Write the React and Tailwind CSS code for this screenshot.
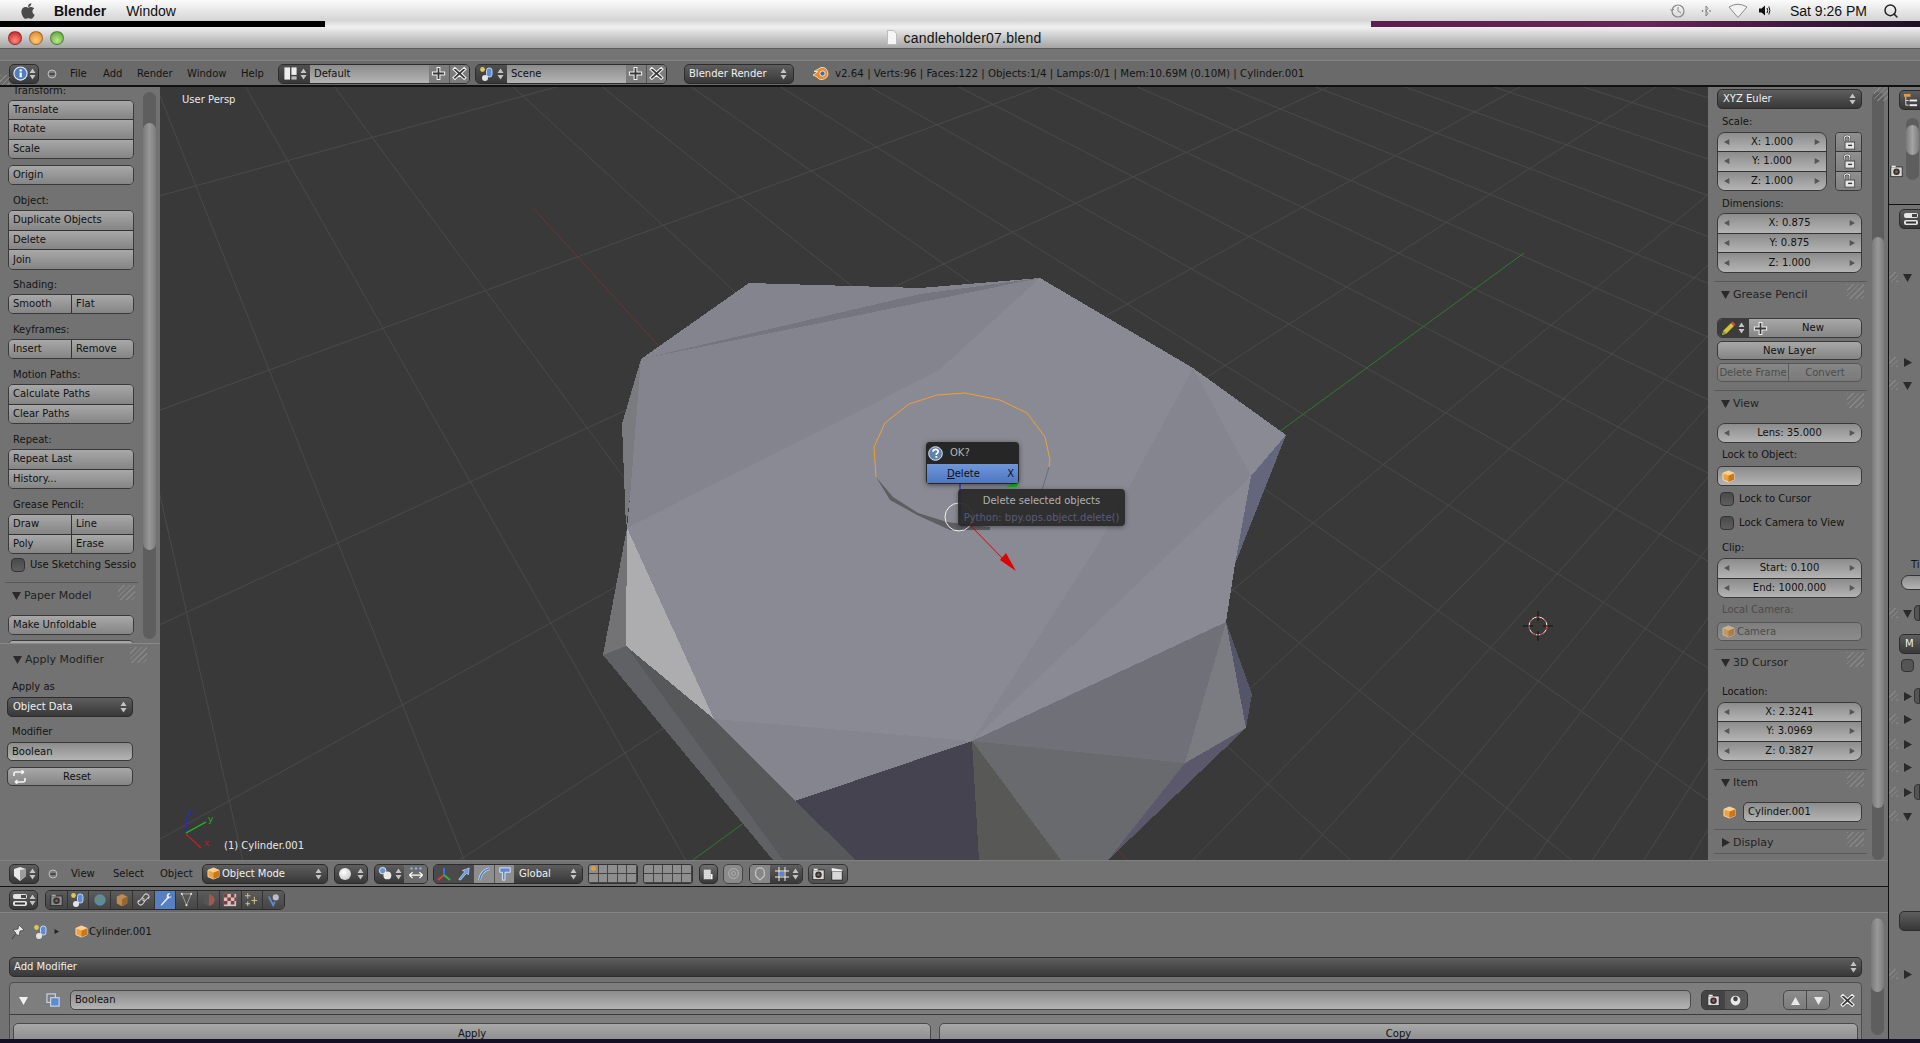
import { Search } from "lucide-react";
import { FaApple } from "react-icons/fa";

const darkBtn = "rounded-[5px] border border-[#2c2c2c] bg-gradient-to-b from-[#5e5e5e] to-[#383838] text-[#f0f0f0]";
const lightBtn = "border-[#3a3a3a] bg-gradient-to-b from-[#a8a8a8] to-[#858585] text-[#111]";
const fieldBg = "bg-gradient-to-b from-[#8c8c8c] to-[#b4b4b4] text-[#111]";
const hatch = "bg-[repeating-linear-gradient(135deg,#868686_0px,#868686_1px,transparent_1px,transparent_4px)]";

function Spin({ color = "#c4c4c4" }) {
  return (
    <svg width="7" height="12" viewBox="0 0 7 12" className="shrink-0">
      <path d="M3.5 0.5 L6.5 5 H0.5 Z M3.5 11.5 L0.5 7 H6.5 Z" fill={color} />
    </svg>
  );
}

function Tri({ dir = "down", className = "", color = "#2a2a2a", size = 9 }) {
  const d = dir === "down" ? "M0 1 H9 L4.5 9 Z" : dir === "right" ? "M1 0 L9 4.5 L1 9 Z" : dir === "up" ? "M4.5 1 L9 9 H0 Z" : "M8 0 L0 4.5 L8 9 Z";
  return (
    <svg width={size} height={size} viewBox="0 0 9 9" className={`shrink-0 ${className}`}>
      <path d={d} fill={color} />
    </svg>
  );
}

function Cube({ size = 14, faded = false }) {
  return (
    <svg width={size} height={size} viewBox="0 0 14 14" className="shrink-0" opacity={faded ? 0.6 : 1}>
      <path d="M7 1 L13 3.5 V10.5 L7 13 L1 10.5 V3.5 Z" fill="#f0a040" stroke="#fff1d6" strokeWidth="0.8" />
      <path d="M7 6 L13 3.5 V10.5 L7 13 Z" fill="#c9771c" />
      <path d="M1 3.5 L7 1 L13 3.5 L7 6 Z" fill="#ffd08a" />
    </svg>
  );
}

function Sq({ children, w = 16, h = 16 }) {
  return (
    <svg width={w} height={h} viewBox="0 0 16 16" className="shrink-0">
      {children}
    </svg>
  );
}

const InfoIcon = () => (
  <Sq w={15} h={15}>
    <circle cx="8" cy="8" r="7" fill="#4f7fc0" stroke="#e8eef8" strokeWidth="1.2" />
    <rect x="7" y="7" width="2.4" height="5" fill="#fff" />
    <rect x="7" y="3.6" width="2.4" height="2.2" fill="#fff" />
  </Sq>
);
const LayoutIcon = () => (
  <Sq w={15} h={15}>
    <rect x="1.5" y="1.5" width="6" height="13" fill="#eee" />
    <rect x="9" y="1.5" width="5.5" height="8" fill="#eee" />
    <rect x="9" y="11" width="5.5" height="3.5" fill="#bbb" />
  </Sq>
);
const SceneIcon = () => (
  <Sq>
    <circle cx="3.5" cy="3.5" r="2.4" fill="#d8c85c" />
    <rect x="7.5" y="2" width="5.5" height="9" rx="2.5" fill="#5a8ed8" stroke="#e6eefa" strokeWidth="0.8" />
    <circle cx="6" cy="12" r="3" fill="#e4e4e4" />
  </Sq>
);
const ViewIcon = () => (
  <Sq>
    <path d="M2 3 L8 1 L14 3 V10 L8 15 L2 10 Z" fill="#e8e8e8" />
    <path d="M8 4 V15 L14 10 V3 Z" fill="#9c9c9c" />
  </Sq>
);
const PropsIcon = () => (
  <Sq>
    <rect x="1" y="2" width="14" height="5" rx="2" fill="#e4e4e4" />
    <rect x="1" y="9" width="14" height="5" rx="2" fill="#e4e4e4" />
    <rect x="3" y="10.5" width="10" height="2" fill="#333" />
    <rect x="9" y="3" width="5" height="3" fill="#444" />
  </Sq>
);
const PlusIcon = () => (
  <Sq w={15} h={15}>
    <path d="M6.5 1.5 H9.5 V6.5 H14.5 V9.5 H9.5 V14.5 H6.5 V9.5 H1.5 V6.5 H6.5 Z" fill="#3a3a3a" stroke="#f2f2f2" strokeWidth="1.1" />
  </Sq>
);
const XIcon = () => (
  <Sq w={15} h={15}>
    <path d="M3 1.5 L8 6 L13 1.5 L15 3.5 L10.2 8 L15 12.5 L13 14.5 L8 10 L3 14.5 L1 12.5 L5.8 8 L1 3.5 Z" fill="#3a3a3a" stroke="#f2f2f2" strokeWidth="1.1" />
  </Sq>
);
const LockIcon = () => (
  <Sq w={14} h={17}>
    <path d="M2.5 6 V3.5 A3.2 3 0 0 1 9 3.5 V7" fill="none" stroke="#222" strokeWidth="2.4" />
    <path d="M2.5 6 V3.5 A3.2 3 0 0 1 9 3.5 V7" fill="none" stroke="#f4f4f4" strokeWidth="1.2" />
    <rect x="3.5" y="7.5" width="11" height="8" fill="#e6e6e6" stroke="#333" strokeWidth="0.8" />
    <rect x="7" y="10.5" width="4.5" height="1.6" fill="#333" />
  </Sq>
);
const CameraIcon = ({ dim = false }) => (
  <Sq w={13} h={14}>
    <rect x="1" y="3" width="14" height="12" fill={dim ? "#8c8c8c" : "#d8d8d8"} stroke="#222" />
    <rect x="2" y="1.5" width="5" height="2" fill={dim ? "#aaa" : "#eee"} />
    <circle cx="8" cy="9" r="4" fill="#333" />
    <circle cx="8" cy="9" r="1.8" fill="#a05050" />
  </Sq>
);
const EyeIcon = () => (
  <Sq w={13} h={13}>
    <circle cx="8" cy="8" r="6" fill="#e8e8e8" />
    <circle cx="8" cy="6" r="2.8" fill="#444" />
  </Sq>
);
const Minus = ({ className = "" }) => (
  <svg width="10" height="10" viewBox="0 0 10 10" className={`shrink-0 ${className}`}>
    <circle cx="5" cy="5" r="4" fill="#7c7c7c" stroke="#bdbdbd" />
    <rect x="2.5" y="4.3" width="5" height="1.4" fill="#333" />
  </svg>
);

function Stack({ items, h, cols = 1 }) {
  return (
    <div
      style={{ height: h }}
      className={`mt-[2px] grid overflow-hidden rounded-[5px] border border-[#3a3a3a] ${cols === 2 ? "grid-cols-[62px_1fr]" : "grid-cols-1"}`}
    >
      {items.map((t, i) => (
        <div
          key={t}
          className={`flex items-center bg-gradient-to-b from-[#a8a8a8] to-[#858585] pl-[4px] text-[#111] ${i >= cols ? "border-t border-[#333]" : ""} ${cols === 2 && i % 2 === 1 ? "border-l border-[#333]" : ""}`}
        >
          {t}
        </div>
      ))}
    </div>
  );
}

function Label({ children, className = "mt-[9px]" }) {
  return <div className={`flex h-[14px] items-center text-[#141414] ${className}`}>{children}</div>;
}

function NumRows({ rows, h, w = "w-full" }) {
  return (
    <div style={{ height: h }} className={`flex flex-col overflow-hidden rounded-[8px] border border-[#3a3a3a] ${w}`}>
      {rows.map((t, i) => (
        <div
          key={t}
          className={`flex flex-1 items-center justify-between px-[6px] ${fieldBg} ${i > 0 ? "border-t border-[#333]" : ""}`}
        >
          <Tri dir="left" size={6} color="#555" />
          <span className="text-[#111]">{t}</span>
          <Tri dir="right" size={6} color="#555" />
        </div>
      ))}
    </div>
  );
}

function PanelHead({ title, open = true, h = "h-[33px]", className = "" }) {
  return (
    <div className={`relative -ml-[3px] w-[153px] border-t border-[#5a5a5a] pl-[7px] pt-[3px] ${h} ${className}`}>
      <div className="flex h-[18px] items-center gap-[3px] text-[11px] text-[#222]">
        <Tri dir={open ? "down" : "right"} />
        {title}
      </div>
      <div className={`absolute right-[3px] top-[2px] h-[15px] w-[17px] ${hatch}`} />
    </div>
  );
}

function Check({ label, className = "" }) {
  return (
    <div className={`flex h-[14px] items-center gap-[5px] whitespace-nowrap text-[#141414] ${className}`}>
      <span className="h-[14px] w-[14px] shrink-0 rounded-[4px] border border-[#333] bg-gradient-to-b from-[#4a4a4a] to-[#5e5e5e]" />
      {label}
    </div>
  );
}

function ToolPanel() {
  return (
    <div className="relative h-[556px] w-full overflow-hidden">
      <div className="ml-[8px] flex w-[126px] flex-col">
        <Label className="-mt-[3px] pl-[5px]">Transform:</Label>
        <Stack h={59} items={["Translate", "Rotate", "Scale"]} />
        <div className="mt-[4px]">
          <Stack h={20} items={["Origin"]} />
        </div>
        <Label className="mt-[9px] pl-[5px]">Object:</Label>
        <Stack h={60} items={["Duplicate Objects", "Delete", "Join"]} />
        <Label className="mt-[8px] pl-[5px]">Shading:</Label>
        <Stack h={20} cols={2} items={["Smooth", "Flat"]} />
        <Label className="mt-[9px] pl-[5px]">Keyframes:</Label>
        <Stack h={20} cols={2} items={["Insert", "Remove"]} />
        <Label className="mt-[9px] pl-[5px]">Motion Paths:</Label>
        <Stack h={40} items={["Calculate Paths", "Clear Paths"]} />
        <Label className="mt-[9px] pl-[5px]">Repeat:</Label>
        <Stack h={40} items={["Repeat Last", "History..."]} />
        <Label className="mt-[9px] pl-[5px]">Grease Pencil:</Label>
        <Stack h={40} cols={2} items={["Draw", "Line", "Poly", "Erase"]} />
        <div className="mt-[4px] w-[127px] pl-[3px]">
          <Check label="Use Sketching Sessio" />
        </div>
        <PanelHead title="Paper Model" h="h-[31px]" className="mt-[10px] !ml-[-3px] !w-[133px]" />
        <Stack h={20} items={["Make Unfoldable"]} />
        <div className="mt-[3px]">
          <Stack h={20} items={[" "]} />
        </div>
      </div>
      <div className="absolute right-[4px] top-[5px] h-[547px] w-[13px] overflow-hidden rounded-[7px] bg-[#5e5e5e]">
        <div className="mt-[31px] h-[427px] rounded-[7px] bg-gradient-to-r from-[#7a7a7a] via-[#989898] to-[#7c7c7c]" />
      </div>
    </div>
  );
}

function ModifierPanel() {
  return (
    <div className="flex flex-col border-t border-[#8a8a8a] px-[7px]">
      <div className="relative flex h-[36px] items-start pl-[6px] pt-[6px]">
        <div className="flex h-[18px] items-center gap-[3px] text-[11px] text-[#222]">
          <Tri />
          Apply Modifier
        </div>
        <div className={`absolute right-[6px] top-[3px] h-[16px] w-[17px] ${hatch}`} />
      </div>
      <Label className="pl-[5px]">Apply as</Label>
      <div className={`mt-[3px] flex h-[20px] w-[126px] items-center justify-between px-[5px] ${darkBtn}`}>
        Object Data
        <Spin />
      </div>
      <Label className="mt-[8px] pl-[5px]">Modifier</Label>
      <div className={`mt-[3px] flex h-[19px] w-[126px] items-center rounded-[5px] border border-[#3a3a3a] pl-[4px] ${fieldBg}`}>Boolean</div>
      <div className={`relative mt-[6px] flex h-[19px] w-[126px] items-center justify-center rounded-[5px] border ${lightBtn}`}>
        <svg width="15" height="14" viewBox="0 0 15 14" className="absolute left-[4px]">
          <path d="M2 6 V4 Q2 2 4 2 H12 M12 2 L9.5 0.5 M12 2 L9.5 4 M13 8 V10 Q13 12 11 12 H3 M3 12 L5.5 10 M3 12 L5.5 13.5" fill="none" stroke="#f4f4f4" strokeWidth="1.6" />
        </svg>
        <span className="ml-[14px]">Reset</span>
      </div>
    </div>
  );
}

function RightPanel() {
  return (
    <div className="relative h-full w-[180px] shrink-0 overflow-hidden bg-[#727272]">
      <div className="ml-[9px] flex w-[145px] flex-col">
        <div className={`mt-[2px] flex h-[20px] items-center justify-between px-[5px] ${darkBtn}`}>
          XYZ Euler
          <Spin />
        </div>
        <Label className="mt-[6px] pl-[5px]">Scale:</Label>
        <div className="mt-[3px] flex justify-between">
          <NumRows h={59} w="w-[110px]" rows={["X: 1.000", "Y: 1.000", "Z: 1.000"]} />
          <div className="flex h-[59px] w-[27px] flex-col overflow-hidden rounded-[4px] border border-[#3a3a3a]">
            {[0, 1, 2].map((i) => (
              <div key={i} className={`flex flex-1 items-center justify-center bg-gradient-to-b from-[#909090] to-[#808080] ${i > 0 ? "border-t border-[#333]" : ""}`}>
                <LockIcon />
              </div>
            ))}
          </div>
        </div>
        <Label className="mt-[6px] pl-[5px]">Dimensions:</Label>
        <div className="mt-[2px]">
          <NumRows h={60} rows={["X: 0.875", "Y: 0.875", "Z: 1.000"]} />
        </div>
        <PanelHead title="Grease Pencil" h="h-[37px]" className="mt-[8px]" />
        <div className={`flex h-[20px] overflow-hidden rounded-[5px] border ${lightBtn}`}>
          <div className="flex w-[31px] items-center gap-[2px] bg-[#3c3c3c] pl-[3px]">
            <svg width="15" height="15" viewBox="0 0 15 15" className="shrink-0">
              <path d="M1 14 L2.5 9.5 L10 2 L13 5 L5.5 12.5 Z" fill="#d8c238" />
              <path d="M1 14 L2.5 9.5 L5.5 12.5 Z" fill="#7ea34a" />
              <path d="M10 2 L11.5 0.5 L14.5 3.5 L13 5 Z" fill="#d84a4a" />
            </svg>
            <Spin />
          </div>
          <div className="relative flex flex-1 items-center justify-center pl-[16px]">
            <span className="absolute left-[4px] top-[2px]"><PlusIcon /></span>
            New
          </div>
        </div>
        <div className={`mt-[3px] flex h-[19px] items-center justify-center rounded-[5px] border ${lightBtn}`}>New Layer</div>
        <div className="mt-[3px] flex h-[19px] overflow-hidden rounded-[5px] border border-[#565656] bg-gradient-to-b from-[#868686] to-[#7a7a7a] text-[#4c4c4c]">
          <div className="flex w-[71px] items-center justify-center whitespace-nowrap border-r border-[#5c5c5c]">Delete Frame</div>
          <div className="flex flex-1 items-center justify-center">Convert</div>
        </div>
        <PanelHead title="View" className="mt-[8px]" />
        <NumRows h={20} rows={["Lens: 35.000"]} />
        <Label className="mt-[5px] pl-[5px]">Lock to Object:</Label>
        <div className={`mt-[4px] flex h-[20px] items-center rounded-[5px] border border-[#3a3a3a] pl-[4px] ${fieldBg}`}>
          <Cube size={13} />
        </div>
        <Check className="mt-[6px] pl-[3px]" label="Lock to Cursor" />
        <Check className="mt-[10px] pl-[3px]" label="Lock Camera to View" />
        <Label className="mt-[11px] pl-[5px]">Clip:</Label>
        <div className="mt-[3px]">
          <NumRows h={40} rows={["Start: 0.100", "End: 1000.000"]} />
        </div>
        <Label className="mt-[5px] pl-[5px] !text-[#4c4c4c]">Local Camera:</Label>
        <div className="mt-[5px] flex h-[19px] items-center gap-[2px] rounded-[5px] border border-[#565656] bg-gradient-to-b from-[#7e7e7e] to-[#8c8c8c] pl-[4px] text-[#4c4c4c]">
          <Cube size={13} faded />
          Camera
        </div>
        <PanelHead title="3D Cursor" className="mt-[8px]" />
        <Label className="mt-[3px] pl-[5px]">Location:</Label>
        <div className="mt-[3px]">
          <NumRows h={59} rows={["X: 2.3241", "Y: 3.0969", "Z: 0.3827"]} />
        </div>
        <PanelHead title="Item" className="mt-[8px]" />
        <div className="flex h-[20px] items-center">
          <span className="ml-[6px] mr-[7px]"><Cube size={13} /></span>
          <div className={`flex h-[20px] flex-1 items-center rounded-[5px] border border-[#3a3a3a] pl-[4px] ${fieldBg}`}>Cylinder.001</div>
        </div>
        <PanelHead title="Display" open={false} h="h-[24px]" className="mt-[7px]" />
        <div className="-ml-[3px] w-[153px] border-t border-[#5a5a5a]" />
      </div>
      <div className="absolute left-[164px] top-[5px] h-[768px] w-[12px] overflow-hidden rounded-[6px] bg-[#5e5e5e]">
        <div className="mt-[145px] h-[571px] rounded-[6px] bg-gradient-to-r from-[#7a7a7a] via-[#989898] to-[#7c7c7c]" />
      </div>
      <div className={`absolute right-0 top-0 h-[14px] w-[14px] ${hatch}`} />
    </div>
  );
}

// floor grid of the 3D view: two fans of lines, one per vanishing point
const VA = [2467, -437];
const VB = [-51, -434];
const ORIGIN = [961, 676];

function fanLine(vp, through) {
  const dx = through[0] - vp[0];
  const dy = through[1] - vp[1];
  return [vp, [vp[0] + dx * 6, vp[1] + dy * 6]];
}

function gridLines() {
  const out = [];
  for (let k = -7; k <= 14; k++) {
    if (k !== 0) out.push(fanLine(VA, [ORIGIN[0], ORIGIN[1] + 140 * k]));
  }
  for (let k = -5; k <= 20; k++) {
    if (k !== 0) out.push(fanLine(VB, [ORIGIN[0] + 190 * k, ORIGIN[1]]));
  }
  return out;
}

const MESH = [
  ["#8a8a94", "641,359 749,283 920,288 1040,278 1193,368 1286,435 1251,476 1235,564 1226,622 972,741 795,801 714,719 627,528 630,497"],
  ["#84848e", "641,359 749,283 920,288 1040,278 938,371 627,528 630,497"],
  ["#757580", "641,359 920,294 1040,278 835,320"],
  ["#85858f", "1193,368 1251,476 972,741 1099,543"],
  ["#85858f", "714,719 972,741 795,801"],
  ["#7a7b7f", "641,359 622,424 626,528 630,497"],
  ["#737376", "627,528 626,646 603,655"],
  ["#adadb0", "627,528 626,646 714,719"],
  ["#57585a", "603,655 626,646 714,719 795,801 856,860 773,860"],
  ["#606164", "626,646 783,860 773,860 603,655"],
  ["#45434f", "795,801 972,741 979,860 856,860"],
  ["#585856", "972,741 979,860 1061,860"],
  ["#696a6d", "972,741 1185,763 1108,860 1061,860"],
  ["#707078", "972,741 1226,622 1185,763"],
  ["#7b7b82", "1226,622 1252,694 1246,728 1185,763"],
  ["#55556a", "1226,622 1252,694 1246,728"],
  ["#5c586c", "1185,763 1246,728 1108,860"],
  ["#64667c", "1286,435 1251,476 1235,564"],
];

function Scene3D() {
  return (
    <svg viewBox="160 87 1548 773" className="block h-full w-full">
      <rect x="160" y="87" width="1548" height="773" fill="#393939" />
      {gridLines().map(([a, b], i) => (
        <line key={i} x1={a[0]} y1={a[1]} x2={b[0]} y2={b[1]} stroke="#4a4a4a" strokeWidth="1" />
      ))}
      <line x1="533" y1="208" x2="1127" y2="860" stroke="#6e3434" strokeWidth="1" />
      <line x1="1524" y1="253" x2="693" y2="860" stroke="#2f7a2f" strokeWidth="1" />
      {MESH.map(([fill, points], i) => (
        <polygon key={i} fill={fill} points={points} shapeRendering="crispEdges" />
      ))}
      <polygon fill="#5d5d62" points="876,477 890,500 917,515 950,530 990,530 990,527 947,522 918,513 893,497" />
      <polyline fill="none" stroke="#f0a030" strokeWidth="1" points="876,477 874,447 885,423 909,404 937,395 965,393 1000,400 1027,413 1045,437 1050,460 1049,467" />
      <polyline fill="none" stroke="#6a6a88" strokeWidth="1" points="1049,467 1042,490" />
      <line x1="960" y1="484" x2="960" y2="517" stroke="#1a1ad0" strokeWidth="1" />
      <polygon fill="#00d000" points="1006,487 1020,478 1017,487" />
      <line x1="970" y1="525" x2="1006" y2="562" stroke="#e00000" strokeWidth="1" />
      <polygon fill="#e00000" points="1000,560 1006,553 1016,571" />
      <circle cx="959" cy="517" r="14" fill="none" stroke="#f0f0f0" strokeWidth="1" />

      <circle cx="1538" cy="626" r="9" fill="none" stroke="#f4f4f4" strokeWidth="1" />
      <circle cx="1538" cy="626" r="9" fill="none" stroke="#d02020" strokeWidth="1" strokeDasharray="4 4" />
      <path d="M1538 611 V621 M1538 631 V641 M1523 626 H1533 M1543 626 H1553" stroke="#111" strokeWidth="1" />

      <line x1="186" y1="833" x2="186" y2="817" stroke="#2828c8" strokeWidth="1.4" />
      <line x1="186" y1="833" x2="206" y2="822" stroke="#22c022" strokeWidth="1.4" />
      <line x1="186" y1="834" x2="201" y2="848" stroke="#c02222" strokeWidth="1.2" />
      <text x="188" y="816" fontSize="9" fill="#2828c8">z</text>
      <text x="208" y="822" fontSize="9" fill="#22b022">y</text>
      <text x="204" y="846" fontSize="9" fill="#b02222">x</text>
    </svg>
  );
}

function Viewport() {
  return (
    <div className="relative h-full flex-1 overflow-hidden">
      <Scene3D />
      <div className="absolute left-[22px] top-[8px] text-[#e8e8e8]">User Persp</div>
      <div className="absolute left-[64px] top-[754px] text-[#e8e8e8]">(1) Cylinder.001</div>
      <div className="absolute left-[766px] top-[355px] h-[42px] w-[93px] rounded-[4px] bg-[#262626] shadow-[0_1px_5px_rgba(0,0,0,0.5)]">
        <div className="flex h-[22px] items-center pl-[2px] text-[#b4b4b4]">
          <svg width="15" height="15" viewBox="0 0 15 15" className="shrink-0">
            <circle cx="7.5" cy="7.5" r="6.8" fill="#5f83b0" stroke="#dfe8f2" strokeWidth="1" />
            <path d="M5 5.8 Q5 3.4 7.6 3.4 Q10.2 3.4 10.2 5.6 Q10.2 7 8.4 7.8 V9" fill="none" stroke="#fff" strokeWidth="1.6" />
            <rect x="7.5" y="10" width="1.8" height="1.8" fill="#fff" />
          </svg>
          <span className="ml-[7px]">OK?</span>
        </div>
        <div className="mx-[1px] flex h-[19px] items-center justify-between bg-gradient-to-b from-[#6e97da] to-[#4f76c2] pl-[20px] pr-[4px] text-[#111]">
          <span><span className="underline">D</span>elete</span>
          <span>X</span>
        </div>
      </div>
      <div className="absolute left-[798px] top-[402px] flex h-[37px] w-[167px] flex-col items-center rounded-[4px] bg-[#252525]/90 pt-[7px] shadow-[0_1px_5px_rgba(0,0,0,0.4)]">
        <div className="text-[#b0b0b0]">Delete selected objects</div>
        <div className="mt-[7px] text-[#5a5a78]">Python: bpy.ops.object.delete()</div>
      </div>
    </div>
  );
}

function Toolbar() {
  const layerCells = Array.from({ length: 10 });
  return (
    <div className="flex h-[26px] items-center border-t border-[#808080] bg-[#727272] pl-[9px] text-[#141414]">
      <div className={`flex h-[20px] w-[30px] items-center justify-center gap-[1px] ${darkBtn}`}>
        <ViewIcon />
        <Spin />
      </div>
      <Minus className="ml-[9px]" />
      <span className="ml-[13px] w-[42px]">View</span>
      <span className="w-[47px]">Select</span>
      <span className="w-[42px]">Object</span>
      <div className={`flex h-[20px] w-[126px] items-center gap-[2px] pl-[4px] pr-[5px] ${darkBtn}`}>
        <Cube size={13} />
        <span className="flex-1">Object Mode</span>
        <Spin />
      </div>
      <div className={`ml-[6px] flex h-[20px] w-[34px] items-center justify-between pl-[4px] pr-[3px] ${darkBtn}`}>
        <span className="h-[12px] w-[12px] rounded-full bg-[radial-gradient(circle_at_40%_35%,#fff,#bbb)]" />
        <Spin />
      </div>
      <div className={`ml-[6px] flex h-[20px] w-[54px] items-center gap-[2px] overflow-hidden pl-[3px] ${darkBtn}`}>
        <Sq w={15} h={15}>
          <circle cx="5" cy="5" r="3.5" fill="#6a94d4" stroke="#eee" />
          <circle cx="10" cy="10" r="4.2" fill="#e8e8e8" />
        </Sq>
        <Spin />
        <div className="flex h-full flex-1 items-center justify-center bg-[#6c6c6c]">
          <Sq w={18} h={18}>
            <path d="M2 9 H14 M2 9 L5 6.5 M2 9 L5 11.5 M14 9 L11 6.5 M14 9 L11 11.5" fill="none" stroke="#fff" strokeWidth="1.1" />
            <circle cx="4" cy="3" r="1.1" fill="#8ab0e8" />
            <circle cx="8" cy="3" r="1.1" fill="#8ab0e8" />
            <circle cx="12" cy="3" r="1.1" fill="#8ab0e8" />
          </Sq>
        </div>
      </div>
      <div className="ml-[5px] flex h-[20px] w-[150px] overflow-hidden rounded-[5px] border border-[#2c2c2c]">
        <div className="flex w-[20px] items-center justify-center bg-[#4a4a4a]">
          <Sq w={16} h={16}>
            <path d="M8 2 V9" stroke="#3a6fe0" strokeWidth="2" />
            <path d="M8 9 L2 14" stroke="#e03a3a" strokeWidth="2" />
            <path d="M8 9 L14 14" stroke="#3ab03a" strokeWidth="2" />
          </Sq>
        </div>
        <div className="flex w-[20px] items-center justify-center bg-[#4a4a4a]">
          <Sq w={14} h={14}>
            <path d="M2 14 L9 5 L6 4 L14 1 L13 9 L11 7 L4 15 Z" fill="#6a9ce8" stroke="#e6eefa" strokeWidth="0.6" />
          </Sq>
        </div>
        <div className="flex w-[20px] items-center justify-center bg-[#8e8e8e]">
          <Sq w={14} h={14}>
            <path d="M3 15 Q4 5 14 2" fill="none" stroke="#e6eefa" strokeWidth="3" />
            <path d="M3 15 Q4 5 14 2" fill="none" stroke="#4f7fc8" strokeWidth="1.6" />
          </Sq>
        </div>
        <div className="flex w-[20px] items-center justify-center border-l border-[#555] bg-[#8e8e8e]">
          <Sq w={14} h={14}>
            <path d="M5 15 V6 H2 V1 H14 V6 H8 V15 Z" fill="#5d8ad0" stroke="#e6eefa" strokeWidth="1" />
          </Sq>
        </div>
        <div className="flex flex-1 items-center justify-between bg-gradient-to-b from-[#5e5e5e] to-[#383838] pl-[5px] pr-[5px] text-[#f0f0f0]">
          Global
          <Spin />
        </div>
      </div>
      {[0, 1].map((b) => (
        <div key={b} className="ml-[5px] grid h-[20px] w-[50px] grid-cols-5 grid-rows-2 overflow-hidden rounded-[3px] border border-[#333] bg-[#8e8e8e]">
          {layerCells.map((_, i) => (
            <div key={i} className="flex items-center justify-center border-b border-r border-[#444]">
              {b === 0 && i === 0 && <span className="h-[5px] w-[5px] rounded-full bg-[#e89a3a]" />}
            </div>
          ))}
        </div>
      ))}
      <div className={`ml-[6px] flex h-[20px] w-[19px] items-center justify-center ${darkBtn} from-[#6e6e6e] to-[#4e4e4e]`}>
        <Sq w={14} h={14}>
          <rect x="2" y="3" width="8" height="11" fill="#d8d8d8" />
          <path d="M11 8 V14" stroke="#fff" strokeWidth="2" />
        </Sq>
      </div>
      <div className="ml-[5px] flex h-[20px] w-[20px] items-center justify-center rounded-[5px] border border-[#444] bg-[#8a8a8a]">
        <Sq w={13} h={13}>
          <circle cx="8" cy="8" r="6" fill="none" stroke="#b4b4b4" strokeWidth="1.2" />
          <circle cx="8" cy="8" r="2.5" fill="none" stroke="#b4b4b4" />
        </Sq>
      </div>
      <div className="ml-[6px] flex h-[20px] w-[54px] overflow-hidden rounded-[5px] border border-[#333]">
        <div className="flex w-[20px] items-center justify-center bg-[#868686]">
          <Sq w={14} h={14}>
            <path d="M3 10 V6 A5 5 0 0 1 13 6 V10 M3 10 L8 15 M13 10 L8 15" fill="none" stroke="#c4c4c4" strokeWidth="1.4" />
          </Sq>
        </div>
        <div className="flex flex-1 items-center justify-center gap-[2px] rounded-none bg-gradient-to-b from-[#5e5e5e] to-[#383838]">
          <Sq w={16} h={16}>
            <path d="M5 1 V15 M11 1 V15 M1 5 H15 M1 11 H15" stroke="#f0f0f0" strokeWidth="1" />
            <rect x="6" y="6" width="4" height="4" fill="#4f86e0" />
          </Sq>
          <Spin />
        </div>
      </div>
      <div className="ml-[5px] flex h-[20px] w-[40px] items-center justify-around rounded-[5px] border border-[#333] bg-gradient-to-b from-[#6e6e6e] to-[#505050]">
        <CameraIcon />
        <Sq w={14} h={14}>
          <rect x="2" y="5" width="12" height="10" fill="#d8d8d8" stroke="#222" />
          <path d="M2 1 L14 3 V5 H2 Z" fill="#eee" />
        </Sq>
      </div>
    </div>
  );
}

const TAB_ICONS = [
  <CameraIcon key="render" dim />,
  <SceneIcon key="scene" />,
  <Sq key="world" w={14} h={14}><circle cx="8" cy="8" r="6.5" fill="#5d8aa8" /><path d="M4 4 Q8 6 7 10 Q4 10 3 7 Z M10 4 L14 7 L11 10 Z" fill="#6f8f5a" /></Sq>,
  <Sq key="object" w={14} h={14}><path d="M8 1 L14 4 V12 L8 15 L2 12 V4 Z" fill="#c08a50" /><path d="M8 7 L14 4 V12 L8 15 Z" fill="#96672f" /></Sq>,
  <Sq key="links" w={15} h={15}><path d="M2 11 L6 7 Q8 6 9 8 M14 5 L10 9 Q8 10 7 8 M6 7 L9 3 Q11 1 13 3 Q15 5 13 7 M10 9 L7 13 Q5 15 3 13 Q1 11 3 9" fill="none" stroke="#cfcfcf" strokeWidth="1.1" /></Sq>,
  <Sq key="wrench" w={15} h={15}><path d="M2 14 L9 6 Q8 2 11 1 Q13 0.5 14 1 L11.5 3.5 L12.5 5 L15 3 Q15 7 11 7.5 L4 15 Z" fill="#dfe8f8" stroke="#1c3c70" strokeWidth="0.4" /></Sq>,
  <Sq key="data" w={15} h={15}><path d="M3 2 H13 L8 14 Z" fill="none" stroke="#b8b8b8" strokeWidth="0.8" /><circle cx="3" cy="2" r="1.1" fill="#ddd" /><circle cx="13" cy="2" r="1.1" fill="#ddd" /><circle cx="8" cy="14" r="1.1" fill="#ddd" /></Sq>,
  <Sq key="material" w={14} h={14}><circle cx="8" cy="8" r="6.5" fill="#555" /><path d="M8 1.5 A6.5 6.5 0 0 1 8 14.5 Z" fill="#a0584e" /></Sq>,
  <Sq key="texture" w={14} h={14}><rect x="1" y="1" width="14" height="14" fill="#cfc4c4" /><path d="M1 1 H5 V5 H1 Z M9 1 H13 V5 H9 Z M5 5 H9 V9 H5 Z M13 5 H15 V9 H13 Z M1 9 H5 V13 H1 Z M9 9 H13 V13 H9 Z" fill="#8a3a3a" /></Sq>,
  <Sq key="particles" w={15} h={15}><path d="M4 1 V7 M1 4 H7 M11 5 V13 M8 9 H14 M4 10 V15 M1.5 12.5 H6.5" stroke="#d8c890" strokeWidth="1" /></Sq>,
  <Sq key="physics" w={14} h={14}><circle cx="10" cy="5" r="3.5" fill="#b8bcc8" /><path d="M2 4 L7 14 L9 10" fill="none" stroke="#5d8ad0" strokeWidth="2" /></Sq>,
];

function PropsHeader() {
  return (
    <div className="flex h-[26px] items-center border-b border-[#858585] bg-[#696969] pl-[9px]">
      <div className={`flex h-[20px] w-[29px] items-center justify-center gap-[1px] ${darkBtn}`}>
        <PropsIcon />
        <Spin />
      </div>
      <div className="ml-[7px] flex h-[20px] w-[240px] overflow-hidden rounded-[5px] border border-[#2c2c2c]">
        {TAB_ICONS.map((icon, i) => (
          <div key={i} className={`flex flex-1 items-center justify-center border-r border-[#333] last:border-r-0 ${i === 5 ? "bg-[#5680c2]" : "bg-gradient-to-b from-[#5c5c5c] to-[#454545]"}`}>
            {icon}
          </div>
        ))}
      </div>
    </div>
  );
}

function PropsBody() {
  return (
    <div className="relative flex-1 overflow-hidden bg-[#727272] pl-[9px] text-[#141414]">
      <div className="flex h-[44px] items-center pb-[7px]">
        <Sq w={16} h={16}>
          <path d="M3 15 L7 9 L4 6 L9 5 L10 1 L15 6 L11 7 L10 12 L7 10 Z" fill="#e8e8e8" stroke="#333" strokeWidth="0.6" />
        </Sq>
        <span className="ml-[8px]"><SceneIcon /></span>
        <span className="ml-[5px]"><Tri dir="right" size={5} color="#222" /></span>
        <span className="ml-[16px]"><Cube size={13} /></span>
        <span className="ml-[1px]">Cylinder.001</span>
      </div>
      <div className={`flex h-[20px] w-[1853px] items-center justify-between px-[4px] ${darkBtn}`}>
        Add Modifier
        <Spin />
      </div>
      <div className="mt-[5px] h-[60px] w-[1853px] rounded-t-[5px] border border-[#4e4e4e] border-b-0 bg-[#7e7e7e]">
        <div className="flex h-[32px] items-center border-b border-[#3c3c3c] pl-[9px] pt-[3px]">
          <Tri color="#f0f0f0" />
          <span className="ml-[18px]">
            <Sq w={15} h={15}>
              <rect x="1" y="1" width="9" height="9" fill="none" stroke="#c8d8f0" strokeWidth="1.2" />
              <rect x="5" y="5" width="9" height="9" fill="#5d8ad0" stroke="#c8d8f0" strokeWidth="1.2" />
            </Sq>
          </span>
          <div className={`ml-[9px] flex h-[20px] w-[1621px] items-center rounded-[5px] border border-[#4a4a4a] pl-[4px] ${fieldBg}`}>Boolean</div>
          <div className="ml-[10px] flex h-[20px] w-[47px] overflow-hidden rounded-[5px] border border-[#3a3a3a] bg-[#5a5a5a]">
            <div className="flex flex-1 items-center justify-center bg-[#444]"><CameraIcon /></div>
            <div className="flex flex-1 items-center justify-center"><EyeIcon /></div>
          </div>
          <div className="ml-[35px] flex h-[20px] w-[47px] overflow-hidden rounded-[5px] border border-[#4a4a4a] bg-gradient-to-b from-[#8c8c8c] to-[#7c7c7c]">
            <div className="flex flex-1 items-center justify-center border-r border-[#4a4a4a]"><Tri dir="up" color="#e8e8e8" /></div>
            <div className="flex flex-1 items-center justify-center"><Tri color="#e8e8e8" /></div>
          </div>
          <span className="ml-[10px]"><XIcon /></span>
        </div>
        <div className="mt-[8px] flex gap-[8px] pl-[3px]">
          {["Apply", "Copy"].map((t) => (
            <div key={t} className={`flex h-[24px] items-start justify-center rounded-t-[5px] border border-[#4a4a4a] pt-[5px] ${lightBtn} ${t === "Apply" ? "w-[918px]" : "w-[919px]"}`}>
              {t}
            </div>
          ))}
        </div>
      </div>
      <div className="absolute right-[4px] top-[5px] h-[117px] w-[13px] overflow-hidden rounded-[7px] bg-[#5e5e5e]">
        <div className="h-[74px] rounded-[7px] bg-gradient-to-r from-[#7a7a7a] via-[#989898] to-[#7c7c7c]" />
      </div>
    </div>
  );
}

function StripTri({ dir = "down", className = "", button = false }) {
  return (
    <div className={`flex h-[10px] items-center ${className}`}>
      <div className={`h-[10px] w-[9px] shrink-0 ${hatch}`} />
      <Tri dir={dir} className="ml-[5px]" />
      {button && <div className="ml-[2px] h-[16px] w-[14px] rounded-l-[4px] border border-[#333] bg-[#555]" />}
    </div>
  );
}

function RightStrip() {
  return (
    <div className="h-full flex-1 overflow-hidden bg-[#727272] text-[#141414]">
      <div className="relative h-[115px] border-b border-[#111]">
        <div className={`ml-[10px] mt-[3px] flex h-[20px] w-[30px] items-center pl-[3px] ${darkBtn}`}>
          <Sq w={15} h={15}>
            <rect x="1" y="1" width="7" height="3" fill="#e89a3a" />
            <path d="M3 4 V13 H6 M3 8 H6" stroke="#ddd" fill="none" />
            <rect x="7" y="7" width="8" height="2" fill="#eee" />
            <rect x="7" y="12" width="8" height="2" fill="#eee" />
          </Sq>
        </div>
        <div className="ml-[17px] mt-[8px] h-[62px] w-[13px] rounded-[7px] bg-[#5e5e5e] pt-[7px]">
          <div className="h-[30px] rounded-[7px] bg-gradient-to-r from-[#7a7a7a] via-[#a4a4a4] to-[#7c7c7c]" />
        </div>
        <div className="absolute left-[1px] top-[74px]"><CameraIcon /></div>
      </div>
      <div className={`ml-[10px] mt-[4px] flex h-[20px] w-[30px] items-center pl-[3px] ${darkBtn}`}>
        <PropsIcon />
      </div>
      <StripTri className="mt-[43px]" />
      <StripTri dir="right" className="mt-[75px]" />
      <StripTri className="mt-[13px]" />
      <div className="ml-[22px] mt-[168px] h-[14px] leading-[14px]">Ti</div>
      <div className={`ml-[12px] mt-[3px] h-[15px] w-[30px] rounded-l-[8px] ${fieldBg} border border-[#333]`} />
      <StripTri className="mt-[18px]" button />
      <div className={`ml-[10px] mt-[16px] flex h-[20px] w-[30px] items-center pl-[5px] ${darkBtn}`}>M</div>
      <div className="ml-[12px] mt-[5px] h-[13px] w-[13px] rounded-[4px] border border-[#333] bg-[#555]" />
      <StripTri dir="right" className="mt-[19px]" button />
      <StripTri dir="right" className="mt-[13px]" />
      <StripTri dir="right" className="mt-[15px]" />
      <StripTri dir="right" className="mt-[13px]" />
      <StripTri dir="right" className="mt-[15px]" button />
      <StripTri className="mt-[14px]" />
      <div className={`ml-[10px] mt-[90px] h-[20px] w-[30px] ${darkBtn}`} />
      <StripTri dir="right" className="mt-[38px]" />
    </div>
  );
}

function TrafficLight({ color }) {
  return <span className={`h-[14px] w-[14px] rounded-full border border-black/30 ${color}`} />;
}

export default function App() {
  return (
    <div className="flex h-[1043px] w-[1920px] flex-col overflow-hidden bg-[#140f22] text-[10px] leading-none [font-family:'DejaVu_Sans',sans-serif]">
      <div className="flex h-[21px] shrink-0 items-center bg-gradient-to-b from-[#fbfbfb] to-[#d4d4d4] text-[14px] text-[#111] [font-family:'Liberation_Sans',sans-serif]">
        <FaApple className="ml-[19px] text-[18px] text-[#4a4a4a]" />
        <span className="ml-[17px] font-bold">Blender</span>
        <span className="ml-[20px]">Window</span>
        <div className="ml-auto flex items-center">
          <svg width="16" height="16" viewBox="0 0 16 16" className="mr-[14px]">
            <circle cx="8" cy="8" r="6" fill="none" stroke="#888" strokeWidth="1.2" />
            <path d="M8 4 V8 L11 10 M2 8 L0.5 6 M2 8 L4 6" fill="none" stroke="#888" />
          </svg>
          <svg width="12" height="12" viewBox="0 0 12 12" className="mr-[16px]">
            <path d="M6 1 V11 M6 1 L8 3.5 L6 6 L8 8.5 L6 11" fill="none" stroke="#777" strokeWidth="0.9" />
            <circle cx="2.5" cy="6" r="0.8" fill="#555" />
            <circle cx="10" cy="6" r="0.8" fill="#555" />
          </svg>
          <svg width="20" height="15" viewBox="0 0 20 15" className="mr-[10px]">
            <path d="M1 4 Q10 -1.5 19 4 L10 14.5 Z" fill="#f2f2f2" stroke="#8a8a8a" />
          </svg>
          <svg width="13" height="13" viewBox="0 0 13 13" className="mr-[19px]">
            <path d="M1 4.5 H3.5 L7 1.5 V11.5 L3.5 8.5 H1 Z" fill="#111" />
            <path d="M9 4 Q10.5 6.5 9 9 M10.8 2.5 Q13 6.5 10.8 10.5" fill="none" stroke="#111" />
          </svg>
          <span>Sat 9:26 PM</span>
          <Search size={16} strokeWidth={2.2} className="ml-[16px] mr-[21px] text-[#222]" />
        </div>
      </div>
      <div className="flex h-[6px] shrink-0 bg-black">
        <div className="w-[325px]" />
        <div className="w-[1046px] bg-gradient-to-b from-[#d8d8d8] to-[#f0f0f0]" />
        <div className="flex-1 bg-gradient-to-r from-[#5c1e52] via-[#6a2458] to-[#1e1028]" />
      </div>
      <div className="flex h-[21px] shrink-0 items-center justify-center bg-gradient-to-b from-[#f0f0f0] to-[#a4a4a4] text-[14px] text-[#111] [font-family:'Liberation_Sans',sans-serif]">
        <div className="absolute left-[8px] flex gap-[7px]">
          <TrafficLight color="bg-[radial-gradient(circle_at_50%_70%,#ff8a80,#c01818)]" />
          <TrafficLight color="bg-[radial-gradient(circle_at_50%_70%,#ffd080,#e07818)]" />
          <TrafficLight color="bg-[radial-gradient(circle_at_50%_70%,#b8e890,#50a028)]" />
        </div>
        <svg width="10" height="15" viewBox="0 0 10 15" className="ml-[8px] mr-[7px]">
          <path d="M0.5 0.5 H6.5 L9.5 3.5 V14.5 H0.5 Z" fill="#f6f6f6" stroke="#bdbdbd" />
        </svg>
        <span className="tracking-[0.2px]">candleholder07.blend</span>
      </div>
      <div className="h-[12px] shrink-0 border-t border-[#5c5c5c] bg-[#757575]" />
      <div className="relative flex h-[27px] shrink-0 items-center border-t border-[#858585] border-b-2 border-b-[#111] bg-[#6a6a6a] pl-[9px] pt-[1px] text-[#141414]">
        <div className={`absolute bottom-0 left-0 h-[10px] w-[10px] ${hatch}`} />
        <div className={`flex h-[20px] w-[30px] items-center justify-center gap-[1px] ${darkBtn}`}>
          <InfoIcon />
          <Spin />
        </div>
        <Minus className="ml-[8px]" />
        <span className="ml-[13px] w-[33px]">File</span>
        <span className="w-[34px]">Add</span>
        <span className="w-[50px]">Render</span>
        <span className="w-[54px]">Window</span>
        <span className="w-[37px]">Help</span>
        {[
          { name: "Default", icon: <LayoutIcon /> },
          { name: "Scene", icon: <SceneIcon /> },
        ].map((s, i) => (
          <div key={s.name} className={`flex h-[20px] w-[192px] overflow-hidden rounded-[5px] border border-[#2c2c2c] ${i === 1 ? "ml-[5px]" : ""}`}>
            <div className="flex w-[31px] items-center justify-center gap-[2px] bg-gradient-to-b from-[#505050] to-[#383838]">
              {s.icon}
              <Spin />
            </div>
            <div className={`flex w-[119px] items-center pl-[4px] ${fieldBg}`}>{s.name}</div>
            <div className="flex flex-1 items-center justify-center bg-[#7c7c7c]"><PlusIcon /></div>
            <div className="flex flex-1 items-center justify-center border-l border-[#555] bg-[#7c7c7c]"><XIcon /></div>
          </div>
        ))}
        <div className={`ml-[17px] flex h-[20px] w-[110px] items-center justify-between pl-[4px] pr-[6px] ${darkBtn}`}>
          Blender Render
          <Spin />
        </div>
        <svg width="16" height="15" viewBox="0 0 16 15" className="ml-[19px]">
          <path d="M0 9 L5 5.5 L1 5.5 L8 1.5 A6 6 0 1 1 4 11 L0 9 Z" fill="#f08a20" stroke="#fff" strokeWidth="0.7" />
          <circle cx="9.5" cy="7.5" r="2.6" fill="#3a6fb0" stroke="#fff" strokeWidth="0.8" />
        </svg>
        <span className="ml-[6px] whitespace-nowrap text-[10.25px]">v2.64 | Verts:96 | Faces:122 | Objects:1/4 | Lamps:0/1 | Mem:10.69M (0.10M) | Cylinder.001</span>
      </div>
      <div className="flex h-[952px] shrink-0">
        <div className="flex w-[1888px] shrink-0 flex-col">
          <div className="flex h-[773px] shrink-0">
            <div className="h-full w-[160px] shrink-0 bg-[#727272]">
              <ToolPanel />
              <ModifierPanel />
            </div>
            <Viewport />
            <RightPanel />
          </div>
          <Toolbar />
          <div className="h-px shrink-0 bg-[#111]" />
          <PropsHeader />
          <PropsBody />
        </div>
        <div className="w-px shrink-0 bg-[#111]" />
        <RightStrip />
      </div>
      <div className="flex-1 bg-[#140f22]" />
    </div>
  );
}
